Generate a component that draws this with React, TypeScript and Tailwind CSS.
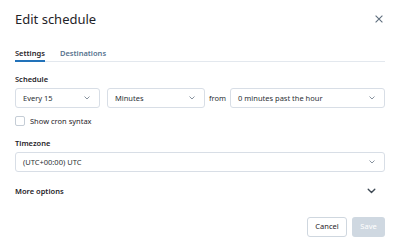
function Chevron({ className = "" }: { className?: string }) {
  return (
    <svg viewBox="0 0 6 4" className={className} fill="none">
      <path d="M0.8 0.8 L3 3 L5.2 0.8" stroke="currentColor" strokeWidth="0.9" strokeLinecap="round" strokeLinejoin="round" />
    </svg>
  );
}

function Select({ value, className = "" }: { value: string; className?: string }) {
  return (
    <div
      className={`flex h-[20px] items-center justify-between rounded-[3px] border border-[#d8dee6] bg-white pl-[7px] pr-[9px] text-[7.5px] leading-[12px] text-[#2b3035] ${className}`}
    >
      <span>{value}</span>
      <Chevron className="h-[4px] w-[6px] text-[#7b8794]" />
    </div>
  );
}

export default function App() {
  return (
    <div
      className="h-[251px] w-[400px] bg-white px-[15px] text-[#1f2328]"
      style={{ fontFamily: '"Noto Sans", "Open Sans", sans-serif' }}
    >
      <div className="flex h-[37px] items-center justify-between">
        <h1 className="text-[13px] leading-[18px] text-[#1f2328]">Edit schedule</h1>
        <svg viewBox="0 0 8 8" className="mr-[2px] h-[8px] w-[8px] text-[#5f6e7d]" fill="none">
          <path d="M0.6 0.6 L7.4 7.4 M7.4 0.6 L0.6 7.4" stroke="currentColor" strokeWidth="1.1" />
        </svg>
      </div>

      <div className="mt-[10px] flex gap-[15px] border-b border-[#e3e8ee] text-[7.5px] leading-[12px]">
        <div className="-mb-px border-b-2 border-[#2272b9] pb-[1px] font-semibold text-[#1f2328]">
          Settings
        </div>
        <div className="-mb-px border-b-2 border-transparent pb-[1px] font-semibold text-[#56728e]">
          Destinations
        </div>
      </div>

      <div className="mt-[11px] text-[7.5px] font-semibold leading-[12px] text-[#1f2328]">Schedule</div>
      <div className="mt-[3px] flex items-center">
        <Select value="Every 15" className="w-[85px]" />
        <Select value="Minutes" className="ml-[7px] w-[98px]" />
        <span className="ml-[4px] mr-[4px] text-[7.5px] leading-[12px] text-[#2b3035]">from</span>
        <Select value="0 minutes past the hour" className="flex-1" />
      </div>

      <label className="mt-[7px] flex h-[12px] items-center gap-[5px]">
        <span className="h-[10px] w-[10px] rounded-[2px] border border-[#c5cdd6] bg-white" />
        <span className="text-[7.5px] leading-[12px] text-[#1f2328]">Show cron syntax</span>
      </label>

      <div className="mt-[10px] text-[7.5px] font-semibold leading-[12px] text-[#1f2328]">Timezone</div>
      <Select value="(UTC+00:00) UTC" className="mt-[3px] w-full" />

      <div className="mt-[13px] flex h-[12px] items-center justify-between pr-[9px]">
        <span className="text-[7.5px] font-semibold leading-[12px] text-[#1f2328]">More options</span>
        <Chevron className="h-[6px] w-[9px] text-[#3d4853]" />
      </div>

      <div className="mt-[20px] flex justify-end gap-[5px]">
        <button className="h-[20px] w-[40px] rounded-[3px] border border-[#cfd7df] bg-white text-[7.5px] text-[#1f2328]">
          Cancel
        </button>
        <button className="h-[20px] w-[33px] rounded-[3px] bg-[#cfd8e1] text-[7.5px] text-white">
          Save
        </button>
      </div>
    </div>
  );
}
